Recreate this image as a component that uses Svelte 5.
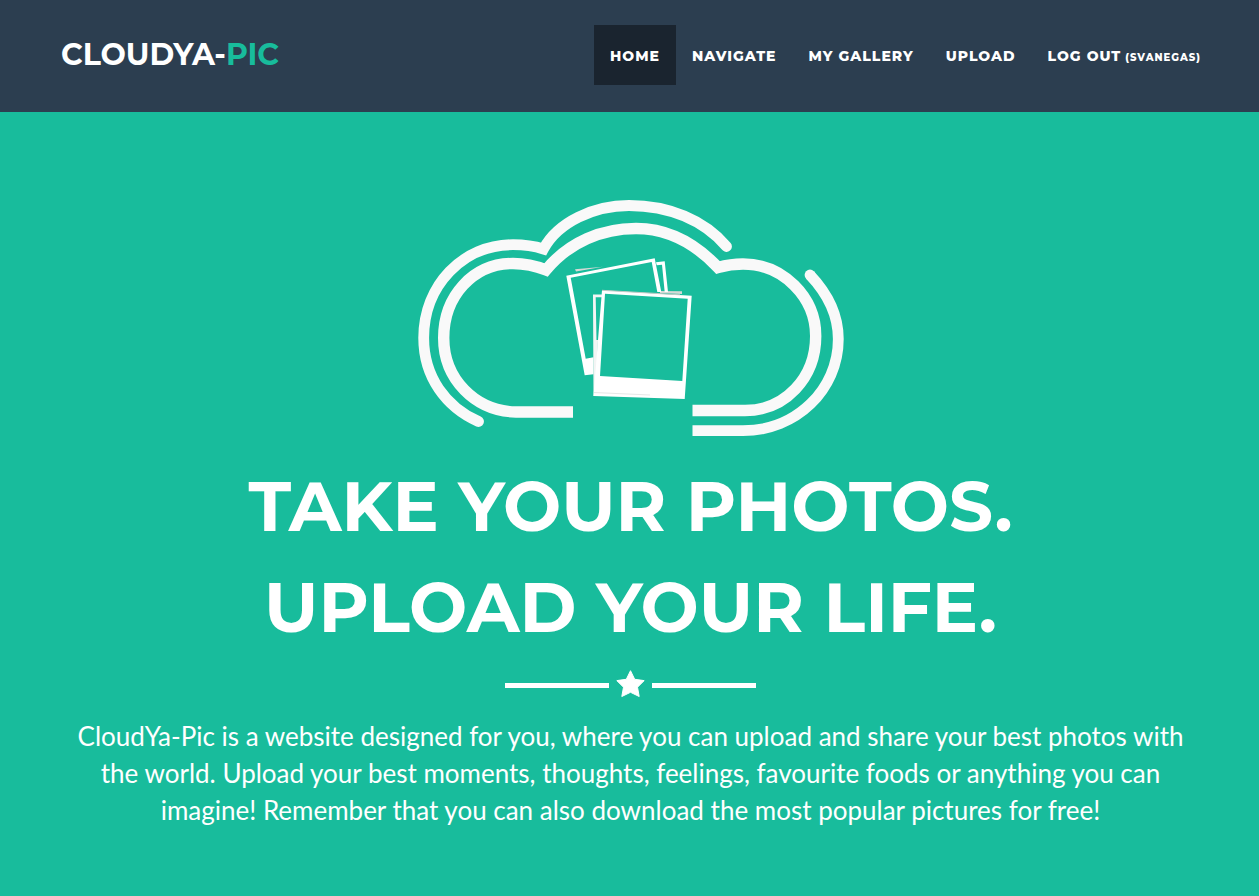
<script>
  const links = [
    { label: 'Home', active: true },
    { label: 'Navigate' },
    { label: 'My Gallery' },
    { label: 'Upload' },
    { label: 'Log out', user: '(svanegas)' }
  ];
</script>

<header id="top">
  <a class="brand" href="#top">CloudYa-<span>Pic</span></a>
  <nav>
    {#each links as l}
      <a href="#top" class:active={l.active}>{l.label}{#if l.user}<small>{l.user}</small>{/if}</a>
    {/each}
  </nav>
</header>

<main>
  <svg class="logo" viewBox="416 196 430 242" aria-hidden="true">
    <g fill="none" stroke="#f9f9f9" stroke-width="10.8">
      <path d="M478.500 421.500C446 407 423.700 377 423.700 338C423.700 285 463 244.700 513 244.700C524 244.700 534 246 543.500 249C558 222 594 205.500 629 205.500C669 205.500 704 220 726.500 246.500" stroke-linecap="round" />
      <path stroke-width="11.400" d="M573 412H516C475 411 443.700 379 443.700 338C443.700 296 473 263.500 513 263.500C525 263.500 536 266 546 270C569 242 602 228.500 636 228.500C667 228.500 693 241 718 267.500C727 265 735 264 743 264C783 264 815.700 297 815.700 336C815.700 378 785 410.500 745 410.500H692.500" />
      <path d="M810 275C828 294 838.300 315 838.300 339C838.300 390 796 430.700 743 430.700H692.500" />
    </g>
    <circle cx="810" cy="275" r="5.400" fill="#f9f9f9" />
    <g fill="#fff" fill-rule="evenodd">
      <path fill="#d5d9d6" d="M575 269.300L603 266.800L576 271.500ZM660 291L682 291.300V294L660 293Z" />
      <path d="M656 262.300L664.700 261.300L668 292H664.700L662 264.700L656.700 265.300Z" />
      <path d="M566.300 275.700L654.700 258.300L661.300 292H657.300L651.700 262L570.700 277.700L585.700 358.700L593.500 357.300V374.300L584.700 375.200Z" />
      <path fill="#f3f5f4" d="M593 294.500H602V297.200H595.700L596.500 340H598L596 396H593.500Z" />
      <path d="M602 290.300L691.700 295.700L684.700 399L593.500 396ZM605 293.700L600 376L682.300 381L687.700 298.700Z" />
    </g>
    <path d="M594 392.500L650 395" fill="none" stroke="#e6e8e7" />
    <path d="M602 290.300L680 294.800" fill="none" stroke="#c3cbc7" />
  </svg>

  <h1>Take your photos.<br />Upload your life.</h1>

  <div class="divider">
    <svg viewBox="0 0 29 31" aria-hidden="true"><path fill="#fff" stroke="#fff" stroke-linejoin="round" d="M14.500 .7L18.700 9.300L28.200 10.600L21.500 17.200L23.200 26.500L14.500 22.300L5.800 26.500L7.500 17.200L.8 10.600L10.300 9.300Z" /></svg>
  </div>

  <p>CloudYa-Pic is a website designed for you, where you can upload and share your best photos with the world. Upload your best moments, thoughts, feelings, favourite foods or anything you can imagine! Remember that you can also download the most popular pictures for free!</p>
</main>

<style>
  :global(body) { margin: 0; background: #18bc9c; }
  header { display: flex; justify-content: space-between; padding: 25px 42px 27px 61px; background: #2c3e50; font-family: Montserrat, Inter, sans-serif; font-weight: 700; text-transform: uppercase; }
  a { color: #fff; text-decoration: none; }
  .brand { font-size: 30px; line-height: 60px; }
  .brand span { color: #18bc9c; }
  nav { display: flex; }
  nav a { height: 60px; padding: 0 16px; font-size: 14px; font-weight: 800; line-height: 62px; letter-spacing: 1px; }
  nav a.active { background: #1a242f; }
  small { margin-left: 4px; font-size: 10px; line-height: 1; }
  main { padding: 84px 60px 70px 62px; text-align: center; color: #fff; }
  .logo { display: block; width: 430px; height: 242px; margin: 0 auto; }
  h1 { margin: 18px 0 0; font: 700 69px/101px Montserrat, Inter, sans-serif; text-transform: uppercase; }
  .divider { display: flex; align-items: center; justify-content: center; gap: 7px; margin: 12px 0 17px; }
  .divider::before, .divider::after { content: ''; width: 104px; height: 5px; background: #fff; }
  .divider svg { width: 29px; height: 31px; }
  p { margin: 0 15px; font: 400 26px/37px Lato, sans-serif; }
</style>
